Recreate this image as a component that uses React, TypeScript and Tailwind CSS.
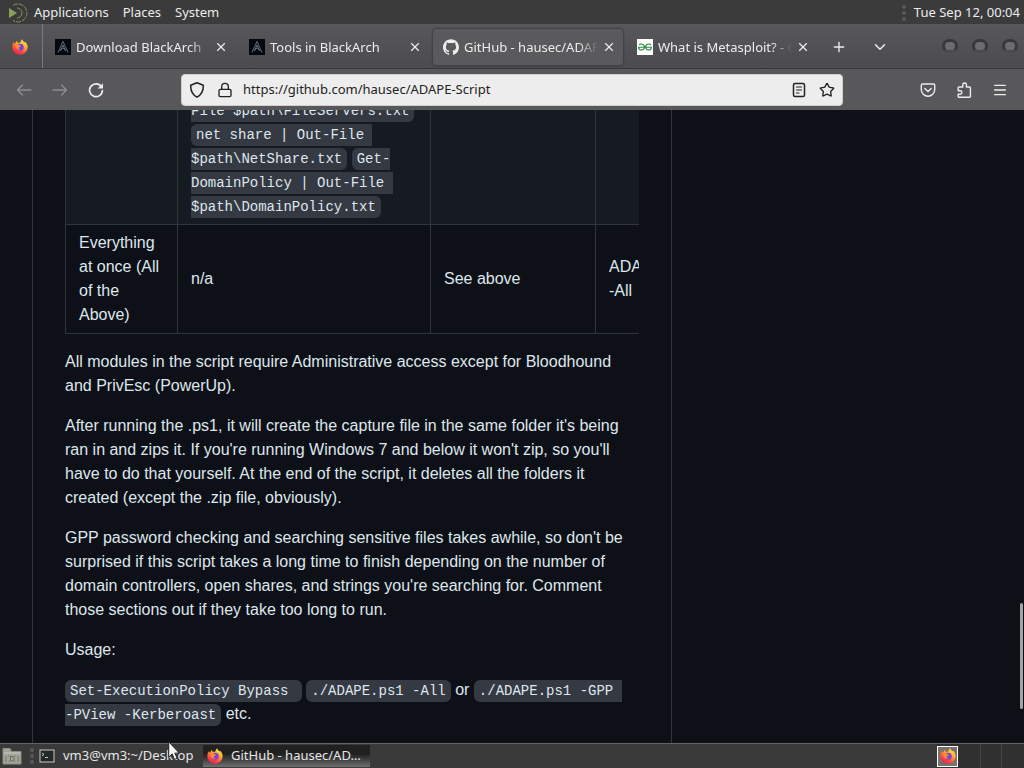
import type { ReactNode } from "react";
import { ChevronDown, Lock, Menu, Plus, Star, X } from "lucide-react";
import { SiGeeksforgeeks, SiGithub } from "react-icons/si";

function FirefoxLogo({ id, className }: { id: string; className: string }) {
  return (
    <svg viewBox="0 0 16 16" className={className} aria-hidden="true">
      <defs>
        <linearGradient id={id} x1="0.8" y1="0" x2="0.25" y2="1">
          <stop offset="0" stopColor="#fff24a" />
          <stop offset="0.4" stopColor="#ffa32e" />
          <stop offset="0.7" stopColor="#ff4b3e" />
          <stop offset="1" stopColor="#e2195f" />
        </linearGradient>
      </defs>
      <path
        d="M10.1.2c.3 1.6 1.5 2.2 2.5 3.1l.5-.6c1.5 1.5 2.6 3.3 2.6 5.6A7.7 7.7 0 0 1 8 15.8 7.7 7.7 0 0 1 .3 8.2C.3 6 .9 4.2 2 3c0 .8.2 1.4.5 1.9C3.3 4 4 3.7 4.3 2c.8.4 1.3 1.1 1.5 2C7 3.9 8 3.6 8.5 3.3 8.6 2.1 9.1 1 10.1.2Z"
        fill={`url(#${id})`}
      />
      <circle cx="8.2" cy="8.3" r="3.5" fill="#7543e0" />
      <path d="M3.6 5.5c1.5-.7 2.8-.3 3.9.8 1 .2 1.7.2 1.5.8-.3.9-1.8.7-2.2 1.6-.3 1 .8 1.7 2 1.5-1.7 1.2-4.8.6-5.2-2.2Z" fill="#ff8b2c" />
    </svg>
  );
}

function BlackArchLogo() {
  return (
    <svg viewBox="0 0 16 16" className="size-4 shrink-0" aria-hidden="true">
      <rect width="16" height="16" fill="#05080d" />
      <path d="M8 2.5 3 13.5M8 2.5l5 11M8 6l-2.5 6M8 6l2.5 6M5.5 10.5 8 9l2.5 1.5" stroke="#74879a" strokeWidth="0.8" fill="none" />
    </svg>
  );
}

function PanelLogo() {
  return (
    <svg viewBox="0 0 20 20" className="size-5" fill="none" aria-hidden="true">
      <path d="M1 5v10l8-5Z" fill="#8aa05a" />
      <path d="M5 2.5a9 9 0 0 1 4-1.5 9 9 0 1 1-4 16.5" stroke="#7f9453" strokeWidth="1" strokeDasharray="5 1" />
      <path d="M9 5a5 5 0 1 1 0 10" stroke="#7f9453" strokeWidth="1" />
    </svg>
  );
}

function ArrowIcon({ back = false }: { back?: boolean }) {
  return (
    <svg viewBox="0 0 16 16" className="size-4" fill="none" stroke="currentColor" strokeWidth="1.3" strokeLinecap="round" strokeLinejoin="round">
      <path d={back ? "M15 8H1.5M6.5 3l-5 5 5 5" : "M1 8h13.5M9.5 3l5 5-5 5"} />
    </svg>
  );
}

function ReloadIcon() {
  return (
    <svg viewBox="0 0 16 16" className="size-4" fill="none" stroke="currentColor" strokeWidth="1.7" strokeLinecap="round">
      <path d="M13.5 5A6.4 6.4 0 1 0 14.4 8.5" />
      <path d="M15 1.2v5.3H9.7Z" fill="currentColor" stroke="none" />
    </svg>
  );
}

function ShieldIcon() {
  return (
    <svg viewBox="0 0 16 16" className="size-4 shrink-0" fill="none" stroke="currentColor" strokeWidth="1.5" strokeLinejoin="round">
      <path d="M8 .8 14.3 3.3C14.5 8.5 13 12.7 8 15.2 3 12.7 1.5 8.5 1.7 3.3Z" />
    </svg>
  );
}

function ReaderIcon() {
  return (
    <svg viewBox="0 0 16 16" className="size-4" fill="none" stroke="currentColor" strokeWidth="1.5" strokeLinecap="round">
      <rect x="2.5" y="1.5" width="11" height="13" rx="1.5" />
      <path d="M5.5 5h5M5.5 8h5M5.5 11h2.5" strokeWidth="1.2" />
    </svg>
  );
}

function PocketIcon() {
  return (
    <svg viewBox="0 0 16 16" className="size-4" fill="none" stroke="currentColor" strokeWidth="1.4" strokeLinecap="round" strokeLinejoin="round">
      <path d="M2.5 2h11a1.2 1.2 0 0 1 1.2 1.2v4.3a6.7 6.7 0 0 1-13.4 0V3.2A1.2 1.2 0 0 1 2.5 2Z" />
      <path d="m4.8 6.5 3.2 3 3.2-3" />
    </svg>
  );
}

function PuzzleIcon() {
  return (
    <svg viewBox="0 0 16 16" className="size-4" fill="none" stroke="currentColor" strokeWidth="1.4" strokeLinejoin="round">
      <path d="M3 5h3.8V2.8a1.8 1.8 0 0 1 3.6 0V5h3.2a.8.8 0 0 1 .8.8v8.7a.8.8 0 0 1-.8.8H3a.8.8 0 0 1-.8-.8v-2.3h2a1.7 1.7 0 0 0 0-3.4h-2v-3A.8.8 0 0 1 3 5Z" />
    </svg>
  );
}

type TabProps = {
  icon: ReactNode;
  title: string;
  active?: boolean;
};

function Tab({ icon, title, active }: TabProps) {
  return (
    <div
      className={
        active
          ? "flex h-9 w-[190px] items-center gap-[5px] rounded-sm bg-[#5a5a5c] pr-1 pl-2.5 shadow-[0_0_2px_1px_#3e3e41]"
          : "flex h-9 w-[190px] items-center gap-[5px] pr-1 pl-2.5"
      }
    >
      {icon}
      <button className="min-w-0 flex-1 overflow-hidden mask-r-from-85% mask-r-to-100% pt-0.5 text-left whitespace-nowrap">
        {title}
      </button>
      <button aria-label="Close tab" className="-ml-1 flex size-5 shrink-0 items-center justify-center">
        <X className="size-3.5" strokeWidth={2} />
      </button>
    </div>
  );
}

function Code({ children }: { children: ReactNode }) {
  return (
    <code className="rounded-md bg-[#343942] px-[5px] py-[3px] font-['Liberation_Mono',monospace] text-[14px] leading-4 whitespace-break-spaces">
      {children}
    </code>
  );
}

function WindowButton({ label }: { label: string }) {
  return (
    <button
      aria-label={label}
      className="h-3.5 w-4 rounded-full border-3 border-[#39393b] border-b-[#4a4a4c] bg-[#6c6c6f]"
    />
  );
}

function Grip() {
  return <span className="h-4 w-1 border-l-4 border-dotted border-[#5a5a5a]" />;
}

export default function App() {
  const cell = "border border-[#30363d] px-[13px] py-1.5";

  return (
    <div className="relative flex h-screen flex-col overflow-hidden bg-[#0d1117] font-['Noto_Sans',sans-serif] text-[13px] text-[#ececec]">
      {/* Desktop panel */}
      <header className="flex h-6 shrink-0 items-center justify-between bg-[#3b3b3c] pt-0.5 pr-1 pl-2">
        <nav className="flex items-center gap-3.5">
          <button className="flex items-center gap-1.5">
            <PanelLogo />
            Applications
          </button>
          <button>Places</button>
          <button>System</button>
        </nav>
        <div className="flex items-center gap-2">
          <Grip />
          <time>Tue Sep 12, 00:04</time>
        </div>
      </header>

      {/* Browser tabs */}
      <div className="flex h-[45px] shrink-0 items-center border-b border-[#38383a] bg-linear-to-b from-[#58585b] to-[#4b4b4f]">
        <button aria-label="Firefox View" className="flex h-full w-[43px] items-center justify-center border-r border-[#7b7b7e] pt-0.5 pr-0.5">
          <FirefoxLogo id="fx-view" className="size-4" />
        </button>
        <div className="ml-0.5 flex gap-1 pt-0.5">
          <Tab icon={<BlackArchLogo />} title="Download BlackArch" />
          <Tab icon={<BlackArchLogo />} title="Tools in BlackArch" />
          <Tab icon={<SiGithub className="size-4 shrink-0" />} title="GitHub - hausec/ADAPE-Script" active />
          <Tab
            icon={
              <span className="flex size-4 shrink-0 items-center justify-center bg-white">
                <SiGeeksforgeeks className="size-3.5 text-[#2f8d46]" />
              </span>
            }
            title="What is Metasploit? - GeeksforGeeks"
          />
        </div>
        <button aria-label="New tab" className="ml-3.5 pt-0.5">
          <Plus className="size-4" />
        </button>
        <button aria-label="List all tabs" className="ml-6 pt-0.5">
          <ChevronDown className="size-[18px]" />
        </button>
        <div className="mr-1.5 ml-auto flex gap-3.5">
          <WindowButton label="Minimize" />
          <WindowButton label="Maximize" />
          <WindowButton label="Close" />
        </div>
      </div>

      {/* Address bar */}
      <div className="flex h-[41px] shrink-0 items-center bg-[#58585a]">
        <div className="flex w-[181px] gap-5 pl-4">
          <button aria-label="Back" className="text-[#8f8f91]">
            <ArrowIcon back />
          </button>
          <button aria-label="Forward" className="text-[#8f8f91]">
            <ArrowIcon />
          </button>
          <button aria-label="Reload">
            <ReloadIcon />
          </button>
        </div>
        <div className="flex h-8 flex-1 items-center gap-3 rounded-sm border border-[#cfcfcf] bg-[#ededed] px-[7px] text-[#222222]">
          <ShieldIcon />
          <Lock className="size-4 shrink-0" strokeWidth={2} />
          <label htmlFor="url" className="sr-only">
            Address
          </label>
          <input
            id="url"
            className="-ml-0.5 min-w-0 flex-1 bg-transparent text-[13px] outline-none"
            defaultValue="https://github.com/hausec/ADAPE-Script"
          />
          <button aria-label="Reader view">
            <ReaderIcon />
          </button>
          <button aria-label="Bookmark">
            <Star className="size-4" strokeWidth={2} />
          </button>
        </div>
        <div className="flex w-[181px] justify-end gap-5 pr-4">
          <button aria-label="Save to Pocket">
            <PocketIcon />
          </button>
          <button aria-label="Extensions">
            <PuzzleIcon />
          </button>
          <button aria-label="Menu">
            <Menu className="size-4" strokeWidth={2} />
          </button>
        </div>
      </div>

      {/* Page, scrolled down to the end of the readme */}
      <main className="relative flex min-h-0 flex-1 overflow-hidden pl-8 font-['Liberation_Sans',sans-serif] text-[16px] leading-6 text-[#dfe6ed]">
        <article className="flex min-w-0 flex-1 flex-col justify-end gap-4 border-x border-[#30363d] px-8 pb-[17px]">
          <div className="shrink-0 overflow-hidden">
            <table className="w-[662px] table-fixed border-collapse">
              <colgroup>
                <col className="w-[112px]" />
                <col className="w-[253px]" />
                <col className="w-[165px]" />
                <col />
              </colgroup>
              <tbody>
                <tr className="bg-[#161b22]">
                  <td className={cell}></td>
                  <td className={cell}>
                    <Code>
                      Out-
                      <br />
                      File $path\FileServers.txt
                    </Code>
                    <br />
                    <Code>net share | Out-File $path\NetShare.txt</Code>{" "}
                    <Code>Get-DomainPolicy | Out-File $path\DomainPolicy.txt</Code>
                  </td>
                  <td className={cell}></td>
                  <td className={cell}></td>
                </tr>
                <tr>
                  <td className={cell}>Everything at once (All of the Above)</td>
                  <td className={cell}>n/a</td>
                  <td className={cell}>See above</td>
                  <td className={cell}>
                    ADAPE.ps1
                    <br />
                    -All
                  </td>
                </tr>
              </tbody>
            </table>
          </div>
          <p>All modules in the script require Administrative access except for Bloodhound and PrivEsc (PowerUp).</p>
          <p>
            After running the .ps1, it will create the capture file in the same folder it's being ran in and zips it. If
            you're running Windows 7 and below it won't zip, so you'll have to do that yourself. At the end of the script,
            it deletes all the folders it created (except the .zip file, obviously).
          </p>
          <p>
            GPP password checking and searching sensitive files takes awhile, so don't be surprised if this script takes a
            long time to finish depending on the number of domain controllers, open shares, and strings you're searching
            for. Comment those sections out if they take too long to run.
          </p>
          <p>Usage:</p>
          <p>
            <Code>{"Set-ExecutionPolicy Bypass "}</Code> <Code>./ADAPE.ps1 -All</Code> or{" "}
            <Code>
              ./ADAPE.ps1 -GPP <span className="whitespace-nowrap">-PView</span> -Kerberoast
            </Code>{" "}
            etc.
          </p>
        </article>
        <aside className="w-[352px] shrink-0" />
        <span className="absolute right-px bottom-[34px] h-[106px] w-[3px] rounded-full bg-[#a4a4a6]" />
      </main>

      {/* Taskbar */}
      <footer className="relative flex h-[25px] shrink-0 items-center border-t border-[#646464] bg-[#3a3a3a]">
        <button aria-label="Show desktop" className="mr-2 ml-0.5">
          <svg viewBox="0 0 20 18" className="h-[18px] w-5">
            <path d="M1 1.5h7l1.5 3H19V17H1Z" fill="#a3a598" stroke="#8b8d82" />
            <path d="M1.5 6h17" stroke="#c9cbbf" />
            <path d="M4 9v6M16 9v6M6.5 8.5l2 2M13.5 8.5l-2 2M6.5 15l2-2M13.5 15l-2-2" stroke="#75776c" />
            <path d="M8.5 9.5H10a2 2 0 0 1 0 4.5H8.5Z" fill="none" stroke="#6b6d63" />
          </svg>
        </button>
        <Grip />
        <button className="ml-1 flex w-[165px] items-center gap-2 pl-px text-[#e6e6e6]">
          <svg viewBox="0 0 16 14" className="h-3.5 w-4" fill="none" stroke="#c8c8c8">
            <rect x="1" y="1" width="14" height="12" fill="#242828" />
            <path d="m3 4 2 1.5L3 7M6 8.5h3" />
          </svg>
          vm3@vm3:~/Desktop
        </button>
        <button className="flex h-[22px] w-[167px] items-center gap-2 bg-linear-to-b from-[#202020] from-40% to-[#707070] pl-1 text-[#e6e6e6]">
          <FirefoxLogo id="fx-task" className="size-4" />
          GitHub - hausec/AD…
        </button>
        <div className="ml-auto flex h-full items-center bg-[#303030]">
          <button aria-label="Firefox" className="flex size-[21px] items-center justify-center border border-white bg-[#77706c]">
            <FirefoxLogo id="fx-tray" className="size-4" />
          </button>
          <span className="ml-[22px] h-full w-[22px] border-x border-[#444444]" />
          <span className="w-[22px]" />
        </div>
      </footer>

      <svg viewBox="0 0 12 20" className="absolute bottom-[7px] left-[168px] h-5 w-3" aria-hidden="true">
        <path d="M.7.7v15.5l3.5-3.3L6.5 18.5l2.7-1.2-2.4-5.2h4.5Z" fill="#f4f4f4" stroke="#222222" />
      </svg>
    </div>
  );
}
